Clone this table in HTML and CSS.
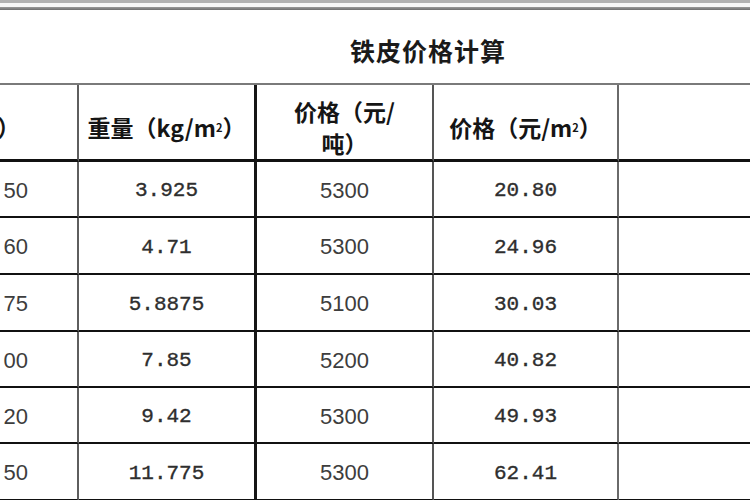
FILE: index.html
```html
<!DOCTYPE html>
<html lang="zh-CN">
<head>
<meta charset="utf-8">
<title>铁皮价格计算</title>
<link rel="stylesheet" href="styles.css">
</head>
<body>
<div class="sheet">
  <div class="topbar"></div>
  <div class="topgap"></div>
  <div class="topline"></div>
  <div class="grid">
    <div class="title">铁皮价格计算</div>

    <div class="cell h c1 clip"><span>厚度（mm）</span></div>
    <div class="cell h c2">重量（kg/m<sup>2</sup>）</div>
    <div class="cell h c3">价格（元/<br>吨）</div>
    <div class="cell h c4">价格（元/m<sup>2</sup>）</div>
    <div class="cell h c5"></div>

    <div class="cell r1 c1 clip sans"><span>0. 50</span></div>
    <div class="cell r1 c2 mono">3.925</div>
    <div class="cell r1 c3 sans">5300</div>
    <div class="cell r1 c4 mono">20.80</div>
    <div class="cell r1 c5"></div>

    <div class="cell r2 c1 clip sans"><span>0. 60</span></div>
    <div class="cell r2 c2 mono">4.71</div>
    <div class="cell r2 c3 sans">5300</div>
    <div class="cell r2 c4 mono">24.96</div>
    <div class="cell r2 c5"></div>

    <div class="cell r3 c1 clip sans"><span>0. 75</span></div>
    <div class="cell r3 c2 mono">5.8875</div>
    <div class="cell r3 c3 sans">5100</div>
    <div class="cell r3 c4 mono">30.03</div>
    <div class="cell r3 c5"></div>

    <div class="cell r4 c1 clip sans"><span>1. 00</span></div>
    <div class="cell r4 c2 mono">7.85</div>
    <div class="cell r4 c3 sans">5200</div>
    <div class="cell r4 c4 mono">40.82</div>
    <div class="cell r4 c5"></div>

    <div class="cell r5 c1 clip sans"><span>1. 20</span></div>
    <div class="cell r5 c2 mono">9.42</div>
    <div class="cell r5 c3 sans">5300</div>
    <div class="cell r5 c4 mono">49.93</div>
    <div class="cell r5 c5"></div>

    <div class="cell r6 c1 clip sans"><span>1. 50</span></div>
    <div class="cell r6 c2 mono">11.775</div>
    <div class="cell r6 c3 sans">5300</div>
    <div class="cell r6 c4 mono">62.41</div>
    <div class="cell r6 c5"></div>
  </div>
</div>
</body>
</html>
```

FILE: styles.css
```css
html, body {
  margin: 0;
  padding: 0;
  background: #ffffff;
}

.sheet {
  width: 750px;
  height: 500px;
  overflow: hidden;
  background: #ffffff;
}

.topbar {
  height: 3px;
  background: #b1b1b1;
}

.topgap {
  height: 4px;
  background: #f6f6f6;
}

.topline {
  height: 3px;
  background: linear-gradient(#9a9a9a, #6e6e6e);
}

.grid {
  display: grid;
  grid-template-columns: 79px 178px 177px 185px 1fr;
  grid-template-rows: 75px 77px 56px 57px 57px 56px 56px 57px;
}

.title {
  grid-column: 1 / -1;
  box-sizing: border-box;
  border-bottom: 2px solid #7a7a7a;
  display: flex;
  align-items: center;
  justify-content: center;
  padding-left: 106px;
  padding-top: 6px;
  font-family: "Noto Sans CJK SC", sans-serif;
  font-weight: 700;
  font-size: 25px;
  letter-spacing: 1px;
  color: #1a1a1a;
}

.cell {
  box-sizing: border-box;
  display: flex;
  align-items: center;
  justify-content: center;
  text-align: center;
  white-space: pre;
  border-bottom: 2px solid #111111;
  color: #3a3a3a;
  padding-top: 3px;
}

.c1 { border-right: 2px solid #5e5e5e; }
.c2 { border-right: 3px solid #161616; }
.c3 { border-right: 2px solid #555555; }
.c4 { border-right: 2px solid #6a6a6a; }

.h {
  border-bottom: 3px solid #111111;
  padding-top: 9px;
  white-space: nowrap;
  font-family: "Noto Sans CJK SC", sans-serif;
  font-weight: 700;
  font-size: 23px;
  line-height: 32px;
  color: #151515;
}

.h sup {
  font-size: 11px;
  line-height: 0;
  vertical-align: 12px;
}

.clip {
  overflow: hidden;
  justify-content: flex-end;
  padding-right: 49px;
}

.h.clip {
  padding-right: 57px;
}

.mono {
  font-family: "Liberation Mono", monospace;
  font-size: 21px;
  color: #2e2e2e;
  -webkit-text-stroke: 0.35px #2e2e2e;
}

.sans {
  font-family: "Liberation Sans", sans-serif;
  font-size: 22px;
  color: #3d3d3d;
}
```
